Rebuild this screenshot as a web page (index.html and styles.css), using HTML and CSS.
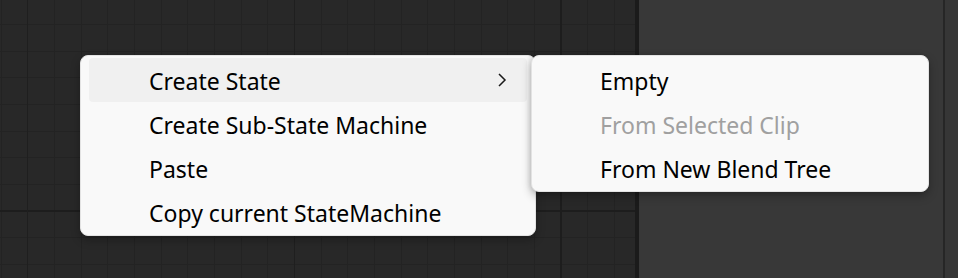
FILE: index.html
```html
<!DOCTYPE html>
<html>
<head>
<meta charset="utf-8">
<link rel="stylesheet" href="styles.css">
</head>
<body>
<div class="app">
  <div class="canvas"></div>
  <div class="divider"></div>
  <div class="panel"></div>
  <div class="divider thin"></div>
  <div class="panel narrow"></div>

  <div class="menu main-menu">
    <div class="item active"><span class="label">Create State</span>
      <svg class="chev" width="10" height="16" viewBox="0 0 10 16"><path d="M2 2 L8 8 L2 14" fill="none" stroke="#1a1a1a" stroke-width="1.5"/></svg>
    </div>
    <div class="item"><span class="label">Create Sub-State Machine</span></div>
    <div class="item"><span class="label">Paste</span></div>
    <div class="item"><span class="label">Copy current StateMachine</span></div>
  </div>

  <div class="menu sub-menu">
    <div class="item"><span class="label">Empty</span></div>
    <div class="item disabled"><span class="label">From Selected Clip</span></div>
    <div class="item"><span class="label">From New Blend Tree</span></div>
  </div>
</div>
</body>
</html>
```

FILE: styles.css
```css
html, body {
  margin: 0;
  padding: 0;
  background: #282828;
}
.app {
  position: relative;
  display: flex;
  width: 958px;
  height: 278px;
  overflow: hidden;
  font-family: "Noto Sans", "Open Sans", sans-serif;
}
.canvas {
  width: 635px;
  flex: none;
  background-color: #282828;
  background-image:
    linear-gradient(to right, transparent 560px, #1d1d1d 560px, #1d1d1d 562px, transparent 562px),
    linear-gradient(to right, transparent 294px, #1f1f1f 294px, #1f1f1f 295px, transparent 295px),
    linear-gradient(to right, transparent 27px, #1f1f1f 27px, #1f1f1f 28px, transparent 28px),
    linear-gradient(to bottom, transparent 210px, #1d1d1d 210px, #1d1d1d 212px, transparent 212px),
    linear-gradient(to right, #232323 1px, transparent 1px),
    linear-gradient(to right, #232323 1px, transparent 1px),
    linear-gradient(to right, #232323 1px, transparent 1px),
    linear-gradient(to bottom, #232323 1px, transparent 1px),
    linear-gradient(to bottom, #232323 1px, transparent 1px),
    linear-gradient(to bottom, #232323 1px, transparent 1px);
  background-size:
    100% 100%, 100% 100%, 100% 100%, 100% 100%,
    80px 100%, 80px 100%, 80px 100%,
    100% 80px, 100% 80px, 100% 80px;
  background-position:
    0 0, 0 0, 0 0, 0 0,
    27px 0, 54px 0, 81px 0,
    0 24px, 0 51px, 0 77px;
  background-repeat:
    no-repeat, no-repeat, no-repeat, no-repeat,
    repeat-x, repeat-x, repeat-x,
    repeat-y, repeat-y, repeat-y;
}
.divider {
  width: 4px;
  flex: none;
  background: #1b1b1b;
}
.divider.thin {
  width: 2px;
  background: #262626;
}
.panel {
  width: 304px;
  flex: none;
  background: #383838;
}
.panel.narrow {
  flex: 1;
  background: #363636;
}
.menu {
  position: absolute;
  top: 55px;
  box-sizing: border-box;
  background: #f9f9f9;
  border: 1px solid #e3e3e3;
  border-radius: 8px;
  padding: 2px 8px 1px 8px;
  box-shadow: 0 4px 10px rgba(0, 0, 0, 0.28);
}
.main-menu {
  left: 80px;
  width: 456px;
}
.sub-menu {
  left: 531px;
  width: 398px;
  padding-bottom: 1px;
  box-shadow: 0 4px 10px rgba(0, 0, 0, 0.28), -2px 0 4px rgba(0, 0, 0, 0.08);
}
.item {
  height: 44px;
  display: flex;
  align-items: center;
  justify-content: space-between;
  padding: 0 20px 0 60px;
  border-radius: 4px;
  font-size: 23px;
  color: #000;
  white-space: nowrap;
}
.item.active {
  background: #f0f0f0;
}
.item.disabled {
  color: #a0a0a0;
}
.label {
  position: relative;
  top: 1px;
}
.chev {
  display: block;
}
```
